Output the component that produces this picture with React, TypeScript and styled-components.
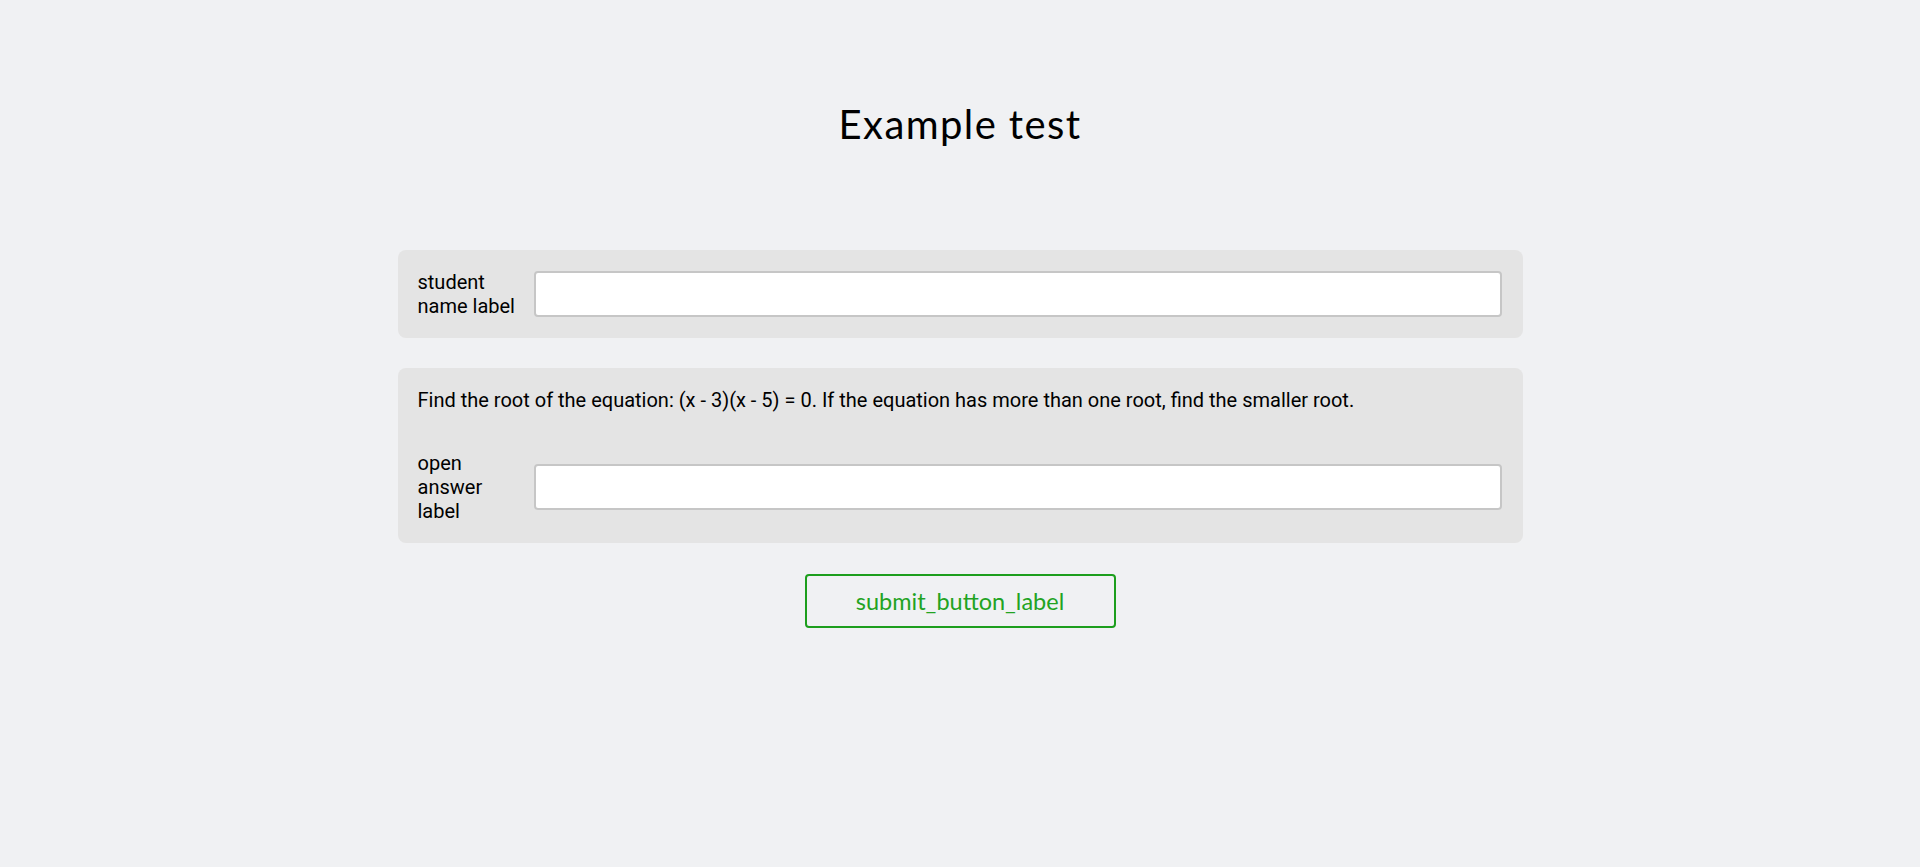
import React from 'react';
import styled, { createGlobalStyle } from 'styled-components';

const GlobalStyle = createGlobalStyle`
  html, body {
    margin: 0;
    padding: 0;
    background: #f0f1f3;
  }
  body {
    font-family: Roboto, "Liberation Sans", Arial, sans-serif;
    color: #000;
  }
`;

const Page = styled.div`
  min-height: 867px;
  display: flex;
  flex-direction: column;
  align-items: center;
`;

const Title = styled.h1`
  margin: 0;
  height: 250px;
  display: flex;
  align-items: center;
  justify-content: center;
  padding-bottom: 2px;
  box-sizing: border-box;
  font-family: Lato, "Open Sans", sans-serif;
  font-weight: 400;
  font-size: 40px;
  letter-spacing: 1.4px;
  color: #000;
`;

const Form = styled.form`
  width: 1125px;
  display: flex;
  flex-direction: column;
  gap: 30px;
`;

const Card = styled.div`
  background: #e4e4e4;
  border-radius: 8px;
  padding: 20px 21px 20px 20px;
  display: flex;
  flex-direction: column;
`;

const Question = styled.p`
  margin: 0 0 39px;
  font-size: 20px;
  line-height: 24px;
`;

const Row = styled.div`
  display: flex;
  align-items: center;
`;

const Label = styled.label`
  width: 100px;
  flex: none;
  margin-right: 16px;
  font-size: 20px;
  line-height: 24px;
`;

const Input = styled.input`
  flex: 1;
  height: 46px;
  box-sizing: border-box;
  border: 2px solid #c6c6c6;
  border-radius: 4px;
  background: #fff;
  font-size: 20px;
  padding: 0 10px;
  outline: none;
`;

const Actions = styled.div`
  display: flex;
  justify-content: center;
  margin-top: 1px;
`;

const SubmitButton = styled.button`
  width: 311px;
  height: 54px;
  border: 2px solid #1c9e1c;
  border-radius: 4px;
  background: transparent;
  color: #22a322;
  font-family: Lato, "Open Sans", sans-serif;
  font-size: 23.5px;
  cursor: pointer;
`;

export default function App() {
  return (
    <>
      <GlobalStyle />
      <Page>
        <Title>Example test</Title>
        <Form onSubmit={(e) => e.preventDefault()}>
          <Card>
            <Row>
              <Label htmlFor="student">student name label</Label>
              <Input id="student" type="text" />
            </Row>
          </Card>
          <Card>
            <Question>
              Find the root of the equation: (x - 3)(x - 5) = 0. If the equation has more than one root, find the smaller root.
            </Question>
            <Row>
              <Label htmlFor="answer">open answer label</Label>
              <Input id="answer" type="text" />
            </Row>
          </Card>
          <Actions>
            <SubmitButton type="submit">submit_button_label</SubmitButton>
          </Actions>
        </Form>
      </Page>
    </>
  );
}
